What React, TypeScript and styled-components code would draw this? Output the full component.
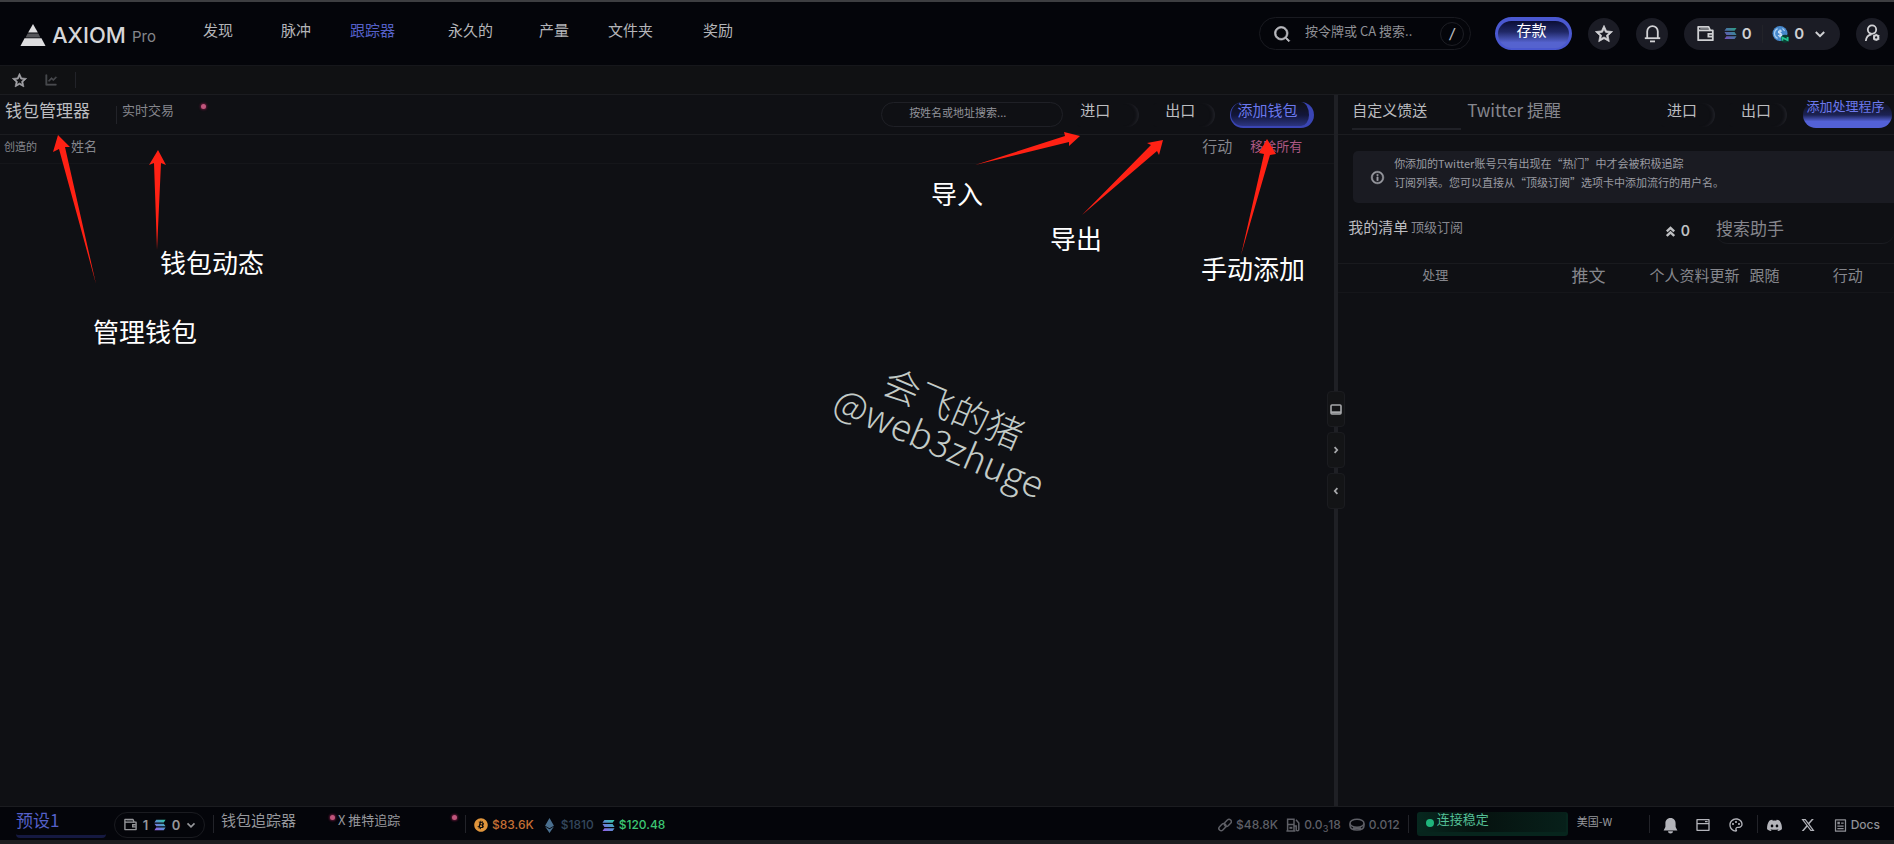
import React from "react";
import styled, { createGlobalStyle } from "styled-components";
import {
  RiStarLine,
  RiLineChartLine,
  RiSearchLine,
  RiInformationLine,
  RiWindow2Line,
  RiPaletteLine,
  RiDiscordFill,
  RiTwitterXFill,
  RiArticleLine,
} from "react-icons/ri";
import { FaBitcoin, FaEthereum } from "react-icons/fa6";

const GlobalStyle = createGlobalStyle`
  * { box-sizing: border-box; }
  body {
    margin: 0;
    background: #0f1014;
    color: #a9aab0;
    font-family: "Noto Sans CJK SC", "Noto Sans", sans-serif;
    font-size: 15px;
    line-height: 20px;
  }
  button, input {
    font: inherit;
    color: inherit;
    background: none;
    border: 0;
    padding: 0;
    margin: 0;
  }
  button { white-space: nowrap; cursor: pointer; }
  a { color: inherit; text-decoration: none; white-space: nowrap; }
  svg { display: block; flex: none; }
`;

const line = "#1b1c20";

const Page = styled.div`
  min-height: 100vh;
  display: flex;
  flex-direction: column;
  border-top: 2px solid #3d3e41;
`;

/* ---------- header ---------- */

const Header = styled.header`
  height: 64px;
  display: flex;
  align-items: center;
  padding: 0 6px 0 20px;
  background: #04050a;
  border-bottom: 1px solid #16171b;
`;

const Brand = styled.a`
  width: 183px;
  flex: none;
  display: flex;
  align-items: center;
  gap: 6px;
  padding-top: 2px;
  color: #d6d6d8;
  font-family: Inter, sans-serif;
  font-size: 22px;
  font-weight: 500;
  line-height: 24px;
`;

const BrandTier = styled.small`
  align-self: flex-end;
  color: #85868b;
  font-size: 15px;
  font-weight: 400;
  line-height: 20px;
`;

const Nav = styled.nav`
  display: grid;
  grid-template-columns: 78px 69px 98px 91px 69px 95px auto;
  padding-bottom: 8px;
`;

const NavLink = styled.a<{ $active?: boolean }>`
  color: ${(p) => (p.$active ? "#5560c8" : "#b4b5b9")};
`;

const HeaderTools = styled.div`
  margin-left: auto;
  display: flex;
  align-items: center;
`;

const GlobalSearch = styled.label`
  width: 212px;
  height: 33px;
  display: flex;
  align-items: center;
  padding: 0 6px 0 13px;
  gap: 14px;
  border: 1px solid #191a20;
  border-radius: 17px;
  color: #b9babf;
  font-size: 13px;

  svg { stroke: currentColor; stroke-width: 1; }
  input {
    flex: 1;
    min-width: 0;
    padding-bottom: 6px;
    outline: none;
  }
  input::placeholder { color: #8f9096; opacity: 1; }
`;

const Slash = styled.kbd`
  width: 24px;
  height: 24px;
  border: 1px solid #1d1e24;
  border-radius: 50%;
  text-align: center;
  font: italic 500 14px/22px Inter, sans-serif;
`;

const DepositButton = styled.button`
  width: 77px;
  height: 33px;
  margin: 0 16px 0 24px;
  padding: 0 4px 10px 0;
  border: 3px solid #4a58d0;
  border-width: 4px 3px 2px;
  border-radius: 17px;
  background: linear-gradient(#0b0e35, #202866 40%, #5563cf 80%);
  color: #fff;
  line-height: 17px;
`;

const RoundButton = styled.button`
  width: 32px;
  height: 32px;
  margin-right: 16px;
  display: flex;
  align-items: center;
  justify-content: center;
  border-radius: 50%;
  background: #1b1c25;
  color: #d2d2d5;

  &:last-child { margin-right: 0; }
`;

const BalanceButton = styled.button`
  width: 156px;
  height: 32px;
  margin-right: 16px;
  padding: 0 14px 0 13px;
  display: flex;
  align-items: center;
  justify-content: space-between;
  border-radius: 16px;
  background: #1b1c25;
  color: #cfd0d3;
  font: 600 15px/20px Inter, sans-serif;
`;

const Amount = styled.span`
  display: flex;
  align-items: center;
  gap: 5px;
`;

/* ---------- shortcuts bar ---------- */

const Shortcuts = styled.div`
  height: 29px;
  display: flex;
  align-items: center;
  gap: 17px;
  padding-left: 12px;
  background: #101113;
  border-bottom: 1px solid ${line};

  button:first-child { color: #a2a2a6; }
  button { color: #4a4b50; }
  svg { stroke: currentColor; stroke-width: 1; }
`;

const Rule = styled.span<{ $height?: number }>`
  width: 1px;
  height: ${(p) => p.$height ?? 18}px;
  flex: none;
  background: #222329;
`;

/* ---------- panels ---------- */

const Main = styled.main`
  flex: 1;
  display: flex;
`;

const WalletPanel = styled.section`
  position: relative;
  flex: 12;
  min-width: 0;
  overflow: hidden;
`;

const HandlerPanel = styled.section`
  flex: 5;
  min-width: 0;
  overflow: hidden;
`;

const PanelHeader = styled.header`
  height: 40px;
  display: flex;
  align-items: center;
  border-bottom: 1px solid ${line};
`;

const Tab = styled.button<{ $size: number; $active?: boolean }>`
  height: 30px;
  padding-bottom: 10px;
  font-size: ${(p) => p.$size}px;
  line-height: 20px;
  color: ${(p) => (p.$active ? "#bcbdc0" : "#86878e")};
`;

const WalletTabs = styled.div`
  display: flex;
  align-items: center;
  padding-left: 5px;

  ${Rule} { margin: 0 5px 0 26px; }
`;

const Dot = styled.i`
  width: 5px;
  height: 5px;
  flex: none;
  border-radius: 50%;
  background: #c0567c;
  box-shadow: 0 0 2px 1px #5a1634;
`;

const TabDot = styled(Dot)`
  margin: 0 0 16px 27px;
`;

const Actions = styled.div`
  margin-left: auto;
  display: flex;
  align-items: center;
`;

const WalletSearch = styled.input`
  width: 182px;
  height: 25px;
  margin-right: 8px;
  padding: 0 27px 6px;
  border: 1px solid #1f2026;
  border-radius: 13px;
  font-size: 11px;
  outline: none;

  &::placeholder { color: #92939a; opacity: 1; }
`;

const GhostButton = styled.button<{ $width: number; $indent: number }>`
  width: ${(p) => p.$width}px;
  height: 24px;
  margin-right: 8px;
  padding: 0 0 10px ${(p) => p.$indent}px;
  border-radius: 12px;
  box-shadow: inset -4px 0 3px -2px #202127;
  text-align: left;
  line-height: 14px;
  color: #bcbdc0;
`;

const AddWalletButton = styled.button`
  width: 84px;
  height: 26px;
  margin: 0 20px 0 7px;
  padding: 0 5px 9px 0;
  border: 2px solid #3a45b4;
  border-width: 0 5px 2px 1px;
  border-radius: 13px;
  background: linear-gradient(#0f1014, #12163a 55%, #2c3580);
  color: #6b78ec;
  line-height: 15px;
`;

const AddHandlerButton = styled.button`
  width: 89px;
  height: 26px;
  margin: 0 2px 0 8px;
  padding: 0 4px 18px 0;
  border-radius: 13px;
  background: linear-gradient(#10111a, #1c2254 50%, #5361d6 75%);
  color: #6b78ec;
  font-size: 13px;
  line-height: 8px;
`;

const HandlerTab = styled(Tab)`
  &:first-child {
    width: 109px;
    margin-right: 6px;
    text-align: left;
    border-bottom: 2px solid #202127;
    padding-bottom: 8px;
  }
`;

const HandlerTabs = styled.div`
  display: flex;
  align-items: center;
  padding-left: 14px;
`;

const Table = styled.table`
  width: 100%;
  border-collapse: collapse;
  table-layout: fixed;
  border-bottom: 1px solid #15161a;
`;

const Th = styled.th<{ $size?: number; $indent?: number; $width?: string }>`
  width: ${(p) => p.$width ?? "auto"};
  height: 28px;
  padding: 0 0 6px ${(p) => p.$indent ?? 0}px;
  font-size: ${(p) => p.$size ?? 15}px;
  font-weight: 400;
  text-align: left;
  white-space: nowrap;
  color: #85868c;
`;

const RemoveAll = styled.button`
  display: block;
  color: #ad5883;
`;

const Splitter = styled.div`
  position: relative;
  width: 4px;
  flex: none;
  background: #1f2025;
`;

const SplitterButtons = styled.div`
  position: absolute;
  left: -7px;
  top: 296px;
  display: grid;
  gap: 5px;
`;

const SplitterButton = styled.button`
  width: 18px;
  height: 36px;
  display: flex;
  align-items: center;
  justify-content: center;
  border: 1px solid #1b1c20;
  border-radius: 4px;
  background: #131416;
  color: #a7a8ab;
`;

const Notice = styled.p`
  height: 52px;
  margin: 16px 0 0 15px;
  padding: 0 0 8px 17px;
  display: flex;
  align-items: center;
  gap: 9px;
  border-radius: 5px 0 0 5px;
  background: #1a1b22;
  color: #9a9ba2;
  font-size: 11px;
  line-height: 19px;
  white-space: nowrap;

  svg { margin-top: 8px; stroke: currentColor; stroke-width: 1; }
`;

const ListBar = styled.div`
  height: 61px;
  display: flex;
  align-items: center;
  padding: 0 0 4px 10px;
  border-bottom: 1px solid #191a1e;

  ${Tab} { padding-bottom: 8px; }
`;

const Quota = styled.span`
  margin-left: auto;
  display: flex;
  align-items: center;
  gap: 6px;
  color: #bfc0c3;
  font: 600 14px/18px Inter, sans-serif;
`;

const HandlerSearch = styled.input`
  width: 178px;
  height: 25px;
  margin-left: 26px;
  padding-bottom: 6px;
  border-bottom: 1px solid #1b1c21;
  border-radius: 0 0 12px 12px;
  font-size: 17px;
  outline: none;

  &::placeholder { color: #85868c; opacity: 1; }
`;

/* ---------- annotations over the wallet panel ---------- */

const Arrow = styled.svg<{ $side: "left" | "right"; $offset: number }>`
  position: absolute;
  top: 35px;
  ${(p) => p.$side}: ${(p) => p.$offset}px;
  pointer-events: none;
`;

const Callout = styled.strong<{ $side: "left" | "right"; $offset: number; $top: number }>`
  position: absolute;
  top: ${(p) => p.$top}px;
  ${(p) => p.$side}: ${(p) => p.$offset}px;
  color: #fff;
  font-size: 26px;
  font-weight: 400;
  line-height: 32px;
  white-space: nowrap;
`;

const Watermark = styled.div`
  position: absolute;
  left: 71%;
  top: 329px;
  transform: translate(-50%, -50%) rotate(23deg);
  color: #c3cbc7;
  font-size: 37px;
  font-weight: 300;
  line-height: 37px;
  text-align: center;
  white-space: nowrap;
`;

/* ---------- footer ---------- */

const Footer = styled.footer`
  height: 38px;
  padding: 0 14px 0 16px;
  display: flex;
  align-items: center;
  background: #04050a;
  border-top: 1px solid ${line};
  border-bottom: 4px solid #1d1e20;
  font-size: 13px;
`;

const Preset = styled.button`
  width: 90px;
  height: 28px;
  padding-bottom: 4px;
  border-bottom: 3px solid #151941;
  border-radius: 4px;
  text-align: left;
  font-size: 17px;
  color: #5560c8;
`;

const WalletPicker = styled.button`
  width: 91px;
  height: 26px;
  margin: 2px 8px 0;
  padding: 0 8px 0 9px;
  display: flex;
  align-items: center;
  justify-content: space-between;
  border: 1px solid #1a1b20;
  border-radius: 13px;
  color: #96979b;
  font: 600 13px/16px Inter, sans-serif;
`;

const Tracker = styled.button<{ $width: number; $size: number }>`
  width: ${(p) => p.$width}px;
  display: flex;
  align-items: center;
  justify-content: space-between;
  padding-bottom: 8px;
  font-size: ${(p) => p.$size}px;
  color: #96979c;

  i { margin-bottom: 5px; }
`;

const Trackers = styled.div`
  display: flex;
  align-items: center;
  gap: 3px;
  padding: 0 8px 0 7px;
`;

const Figures = styled.div<{ $gap: number }>`
  display: flex;
  align-items: center;
  gap: ${(p) => p.$gap}px;
  padding: 3px 8px 0;
  font: 500 12px/16px Inter, sans-serif;
`;

const Figure = styled.span<{ $color: string }>`
  display: flex;
  align-items: center;
  gap: 4px;
  color: ${(p) => p.$color};

  sub { font-size: 9px; line-height: 1; }
`;

const StatusGroup = styled.div`
  margin-left: auto;
  display: flex;
  align-items: center;
`;

const Connection = styled.span`
  width: 151px;
  height: 24px;
  margin: 0 9px 0 8px;
  padding: 0 0 0 9px;
  display: flex;
  align-items: center;
  gap: 3px;
  border: 2px solid #07251d;
  border-width: 0 2px 4px 0;
  border-radius: 3px;
  background: linear-gradient(90deg, #07281f, #06120f 40%, #07201a);
  color: #53bf95;

  b {
    width: 8px;
    height: 8px;
    margin-top: 3px;
    border-radius: 50%;
    background: #1fb57c;
  }
  span { padding-bottom: 6px; }
`;

const Region = styled.button`
  width: 72px;
  padding-bottom: 6px;
  text-align: left;
  font-size: 11px;
  color: #96979c;
`;

const IconLinks = styled.div`
  display: flex;
  align-items: center;
  gap: 17px;
  padding: 3px 13px 0 13px;
  color: #b3b4ba;

  &:last-child { padding-right: 0; padding-left: 8px; }
`;

const DocsLink = styled.a`
  display: flex;
  align-items: center;
  gap: 3px;
  color: #8f9096;
  font: 500 12px/16px Inter, sans-serif;
`;

/* ---------- drawings ---------- */

const Logo = () => (
  <svg width="26" height="22" viewBox="0 0 28 22" preserveAspectRatio="none" fill="#dedee0">
    <path d="M14 0 L19.2 8.6 H8.8 Z" />
    <path d="M8.2 9.4 H19.8 L22 13.4 H6 Z" fill="#55565a" />
    <path d="M4.9 14.2 H23.1 L27.5 22 H.5 Z" />
  </svg>
);

const Solana = ({ size, dim }: { size: number; dim?: boolean }) => (
  <svg width={size} height={size} viewBox="0 0 14 14" opacity={dim ? 0.75 : 1}>
    <defs>
      <linearGradient id="sol" x1="0" y1="1" x2="1" y2="0">
        <stop offset="0" stopColor="#9a5be8" />
        <stop offset=".5" stopColor="#5a8fd0" />
        <stop offset="1" stopColor="#2fd0a0" />
      </linearGradient>
    </defs>
    <path
      fill="url(#sol)"
      d="M2.6 1 H13.5 L11.4 4 H.5 Z M.5 5.5 H11.4 L13.5 8.5 H2.6 Z M2.6 10 H13.5 L11.4 13 H.5 Z"
    />
  </svg>
);

const Usdc = () => (
  <svg width="17" height="18" viewBox="0 0 17 18">
    <circle cx="8" cy="8.5" r="7.5" fill="#4688cc" />
    <path d="M5.6 3.6 A5.4 5.4 0 0 0 5.6 13.4 M10.4 3.6 A5.4 5.4 0 0 1 12.6 6" stroke="#a9cdf0" fill="none" strokeWidth="1.2" />
    <path d="M9.8 6.4 C8.8 5.2 6.4 5.6 6.5 7.1 C6.6 8.7 9.9 8 9.8 9.9 C9.6 11.4 7 11.6 6.1 10.3 M8.1 4.4 V12.4" stroke="#d6e8fa" fill="none" strokeWidth="1.1" />
    <circle cx="13" cy="13.8" r="4" fill="#0b3f33" />
    <path d="M10.4 15.8 V12.6 L15.6 15 V12" stroke="#25c493" strokeWidth="1.8" fill="none" />
  </svg>
);

const WalletIcon = ({ size }: { size: number }) => (
  <svg width={size} height={size} viewBox="0 0 17 17" fill="none" stroke="currentColor" strokeWidth="1.8">
    <path d="M1.2 1.8 H11.6 L13.2 5.4 H15.8 V15.2 H1.2 Z" strokeLinejoin="round" />
    <path d="M1.2 5.4 H13.2" />
    <path d="M3.2 3.4 H11" strokeWidth="1" opacity=".6" />
    <path d="M15.4 8.8 H11.4 V11.6 H15.4" />
  </svg>
);

const Bell = () => (
  <svg width="17" height="19" viewBox="0 0 17 19" fill="none" stroke="currentColor" strokeWidth="1.8">
    <path d="M3.2 14 V7.6 A5.3 5.5 0 0 1 13.8 7.6 V14" />
    <path d="M.8 14.2 H16.2" />
    <path d="M6 17.4 H11" />
  </svg>
);

const BellSolid = () => (
  <svg width="15" height="17" viewBox="0 0 15 17" fill="currentColor">
    <path d="M7.5 1 C4 1 2.4 3.6 2.4 6.4 V10 L.6 13.4 H14.4 L12.6 10 V6.4 C12.6 3.6 11 1 7.5 1 Z M5 14.2 H10 A2.5 2.2 0 0 1 5 14.2 Z" />
  </svg>
);

const Person = () => (
  <svg width="17" height="19" viewBox="0 0 17 19" fill="none" stroke="currentColor" strokeWidth="1.8">
    <circle cx="8" cy="5.6" r="4.2" />
    <path d="M1.8 17 C2.2 13.2 4.2 11 7.6 10.4" />
    <circle cx="12.2" cy="13.4" r="2.2" strokeWidth="2" />
    <path d="M12.2 9.8 V12 M12.2 15 V17 M9 11.6 L11 12.6 M15.4 15.2 L13.4 14 M15.4 11.6 L13.4 12.6 M9 15.2 L11 14" strokeWidth="1" />
  </svg>
);

const Chevron = ({ size }: { size: number }) => (
  <svg width={size} height={size} viewBox="0 0 12 12" fill="none" stroke="currentColor" strokeWidth="2">
    <path d="M1.8 4 L6 8.2 L10.2 4" />
  </svg>
);

const SideChevron = ({ left }: { left?: boolean }) => (
  <svg width="8" height="8" viewBox="0 0 8 8" fill="none" stroke="currentColor" strokeWidth="1.8">
    <path d={left ? "M5.4 1.2 L2.8 4 L5.4 6.8" : "M2.6 1.2 L5.2 4 L2.6 6.8"} />
  </svg>
);

const LinkIcon = () => (
  <svg width="14" height="14" viewBox="0 0 14 14" fill="none" stroke="currentColor" strokeWidth="1.5">
    <rect x="5.8" y="2.6" width="8" height="4.6" rx="2.3" transform="rotate(-45 9.8 4.9)" />
    <rect x=".4" y="6.8" width="8" height="4.6" rx="2.3" transform="rotate(-45 4.4 9.1)" />
  </svg>
);

const Fuel = () => (
  <svg width="14" height="14" viewBox="0 0 14 14" fill="none" stroke="currentColor" strokeWidth="1.5">
    <path d="M1.6 13 V1.2 H8 V13 M.4 13 H9.4 M1.6 6.6 H8 M8 8 H10.2 V11.4 A1.2 1.2 0 0 0 12.8 11.4 V5 L10 1.8" />
    <path d="M3.4 9.8 H6.4" strokeWidth="2" />
  </svg>
);

const Coin = () => (
  <svg width="16" height="13" viewBox="0 0 16 13" fill="none" stroke="currentColor" strokeWidth="1.5">
    <ellipse cx="8" cy="5.2" rx="7" ry="4" />
    <path d="M1 5.4 V7.8 C1 10.4 4 12 8 12 S15 10.4 15 7.8 V5.4" />
    <path d="M4 10.2 H12" strokeWidth="2" />
  </svg>
);

const DoubleUp = () => (
  <svg width="9" height="11" viewBox="0 0 9 11" fill="none" stroke="currentColor" strokeWidth="2.4">
    <path d="M.8 5.4 L4.5 1.8 L8.2 5.4 M.8 10 L4.5 6.4 L8.2 10" />
  </svg>
);

const Monitor = () => (
  <svg width="12" height="11" viewBox="0 0 12 11" fill="none" stroke="currentColor" strokeWidth="1.6">
    <rect x="1" y="1" width="10" height="9" rx="1" />
    <path d="M1 8.3 H11" strokeWidth="2" />
  </svg>
);

type ArrowSpec = {
  side: "left" | "right";
  offset: number;
  width: number;
  height: number;
  points: string;
};

/* Arrow drawings all start at the same height, just above the table head. */
const arrows: ArrowSpec[] = [
  { side: "left", offset: 50, width: 50, height: 156, points: "8,5 20,17 15,17 46,154 9,19 3,22" },
  { side: "left", offset: 145, width: 26, height: 124, points: "13,20 21,35 16,33 12,120 9,33 4,35" },
  { side: "right", offset: 250, width: 112, height: 40, points: "108,6 97,16 97,12 3,35 93,6 92,2" },
  { side: "right", offset: 166, width: 90, height: 90, points: "85,10 81,25 79,21 4,85 73,15 69,13" },
  { side: "right", offset: 53, width: 44, height: 128, points: "30,9 39,24 33,25 4,125 27,24 22,23" },
];

const callouts = [
  { side: "left", offset: 160, top: 151, text: "钱包动态" },
  { side: "left", offset: 93, top: 220, text: "管理钱包" },
  { side: "right", offset: 351, top: 82, text: "导入" },
  { side: "right", offset: 232, top: 127, text: "导出" },
  { side: "right", offset: 29, top: 157, text: "手动添加" },
] as const;

const navItems = ["发现", "脉冲", "跟踪器", "永久的", "产量", "文件夹", "奖励"];

export default function App() {
  return (
    <Page>
      <GlobalStyle />
      <Header>
        <Brand href="#">
          <Logo />
          AXIOM
          <BrandTier>Pro</BrandTier>
        </Brand>
        <Nav>
          {navItems.map((item) => (
            <NavLink key={item} href="#" $active={item === "跟踪器"}>
              {item}
            </NavLink>
          ))}
        </Nav>
        <HeaderTools>
          <GlobalSearch>
            <RiSearchLine size={18} />
            <input type="text" aria-label="搜索" placeholder="按令牌或 CA 搜索.." />
            <Slash>/</Slash>
          </GlobalSearch>
          <DepositButton>存款</DepositButton>
          <RoundButton aria-label="收藏">
            <RiStarLine size={18} stroke="currentColor" strokeWidth={1} />
          </RoundButton>
          <RoundButton aria-label="通知">
            <Bell />
          </RoundButton>
          <BalanceButton>
            <WalletIcon size={17} />
            <Amount>
              <Solana size={13} dim />0
            </Amount>
            <Rule />
            <Amount>
              <Usdc />0
            </Amount>
            <Chevron size={12} />
          </BalanceButton>
          <RoundButton aria-label="账户">
            <Person />
          </RoundButton>
        </HeaderTools>
      </Header>

      <Shortcuts>
        <button aria-label="收藏夹">
          <RiStarLine size={15} />
        </button>
        <button aria-label="图表">
          <RiLineChartLine size={14} />
        </button>
        <Rule $height={16} />
      </Shortcuts>

      <Main>
        <WalletPanel>
          <PanelHeader>
            <WalletTabs>
              <Tab $size={17} $active>
                钱包管理器
              </Tab>
              <Rule />
              <Tab $size={13}>实时交易</Tab>
              <TabDot />
            </WalletTabs>
            <Actions>
              <WalletSearch type="text" aria-label="搜索钱包" placeholder="按姓名或地址搜索..." />
              <GhostButton $width={68} $indent={9}>
                进口
              </GhostButton>
              <GhostButton $width={68} $indent={18}>
                出口
              </GhostButton>
              <AddWalletButton>添加钱包</AddWalletButton>
            </Actions>
          </PanelHeader>
          <Table>
            <thead>
              <tr>
                <Th $width="71px" $size={11} $indent={4}>
                  创造的
                </Th>
                <Th $size={13}>姓名</Th>
                <Th $width="48px">行动</Th>
                <Th $width="84px" $size={13}>
                  <RemoveAll>移除所有</RemoveAll>
                </Th>
              </tr>
            </thead>
          </Table>
          {arrows.map((a) => (
            <Arrow key={a.points} $side={a.side} $offset={a.offset} width={a.width} height={a.height}>
              <polygon points={a.points} fill="#ff2114" />
            </Arrow>
          ))}
          {callouts.map((c) => (
            <Callout key={c.text} $side={c.side} $offset={c.offset} $top={c.top}>
              {c.text}
            </Callout>
          ))}
          <Watermark>
            会飞的猪
            <br />
            @web3zhuge
          </Watermark>
        </WalletPanel>

        <Splitter>
          <SplitterButtons>
            <SplitterButton aria-label="弹出">
              <Monitor />
            </SplitterButton>
            <SplitterButton aria-label="向右折叠">
              <SideChevron />
            </SplitterButton>
            <SplitterButton aria-label="向左折叠">
              <SideChevron left />
            </SplitterButton>
          </SplitterButtons>
        </Splitter>

        <HandlerPanel>
          <PanelHeader>
            <HandlerTabs>
              <HandlerTab $size={15} $active>
                自定义馈送
              </HandlerTab>
              <HandlerTab $size={17}>Twitter 提醒</HandlerTab>
            </HandlerTabs>
            <Actions>
              <GhostButton $width={60} $indent={12}>
                进口
              </GhostButton>
              <GhostButton $width={64} $indent={18}>
                出口
              </GhostButton>
              <AddHandlerButton>添加处理程序</AddHandlerButton>
            </Actions>
          </PanelHeader>
          <Notice>
            <RiInformationLine size={15} />
            <span>
              你添加的Twitter账号只有出现在“热门”中才会被积极追踪
              <br />
              订阅列表。您可以直接从“顶级订阅”选项卡中添加流行的用户名。
            </span>
          </Notice>
          <ListBar>
            <Tab $size={15} $active>
              我的清单
            </Tab>
            <Tab $size={13}>&nbsp;顶级订阅</Tab>
            <Quota>
              <DoubleUp />0
            </Quota>
            <HandlerSearch type="text" aria-label="搜索助手" placeholder="搜索助手" />
          </ListBar>
          <Table>
            <thead>
              <tr>
                <Th $width="42%" $size={13} $indent={84}>
                  处理
                </Th>
                <Th $width="14%" $size={17}>
                  推文
                </Th>
                <Th $width="18%">个人资料更新</Th>
                <Th $width="15%">跟随</Th>
                <Th $width="11%">行动</Th>
              </tr>
            </thead>
          </Table>
        </HandlerPanel>
      </Main>

      <Footer>
        <Preset>预设1</Preset>
        <WalletPicker>
          <WalletIcon size={13} />1
          <Solana size={12} />0
          <Chevron size={10} />
        </WalletPicker>
        <Rule />
        <Trackers>
          <Tracker $width={114} $size={15}>
            钱包追踪器
            <Dot />
          </Tracker>
          <Tracker $width={119} $size={13}>
            X 推特追踪
            <Dot />
          </Tracker>
        </Trackers>
        <Rule />
        <Figures $gap={8}>
          <Figure $color="#c46f34">
            <FaBitcoin size={14} color="#e0953c" />
            $83.6K
          </Figure>
          <Figure $color="#34475c">
            <FaEthereum size={15} color="#4a6f8f" />
            $1810
          </Figure>
          <Figure $color="#3cc573">
            <Solana size={13} />
            $120.48
          </Figure>
        </Figures>
        <StatusGroup>
          <Figures $gap={8}>
            <Figure $color="#5e5f66">
              <LinkIcon />
              $48.8K
            </Figure>
            <Figure $color="#5e5f66">
              <Fuel />
              <span>
                0.0<sub>3</sub>18
              </span>
            </Figure>
            <Figure $color="#5e5f66">
              <Coin />
              0.012
            </Figure>
          </Figures>
          <Rule />
          <Connection>
            <b />
            <span>连接稳定</span>
          </Connection>
          <Region>美国-W</Region>
          <Rule />
          <IconLinks>
            <BellSolid />
            <RiWindow2Line size={16} />
            <RiPaletteLine size={16} />
          </IconLinks>
          <Rule />
          <IconLinks>
            <RiDiscordFill size={17} />
            <RiTwitterXFill size={16} />
            <DocsLink href="#">
              <RiArticleLine size={15} />
              Docs
            </DocsLink>
          </IconLinks>
        </StatusGroup>
      </Footer>
    </Page>
  );
}
